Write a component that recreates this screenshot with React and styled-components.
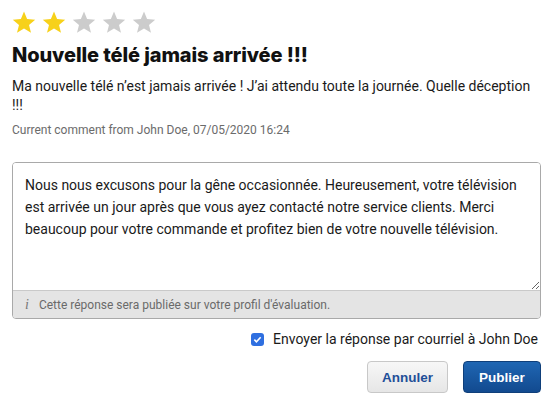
import styled, { createGlobalStyle } from "styled-components";

const GlobalStyle = createGlobalStyle`
  body {
    margin: 0;
    background: #fff;
    font-family: Roboto, "Liberation Sans", sans-serif;
    color: #1a1a1a;
  }
`;

const Page = styled.div`
  padding: 10px 15px 0 12px;
  display: flex;
  flex-direction: column;
`;

const Stars = styled.div`
  display: flex;
  gap: 6px;
  height: 24px;
  align-items: center;
`;

const Title = styled.h1`
  margin: 7px 0 0;
  font-family: Inter, Roboto, sans-serif;
  font-size: 20px;
  font-weight: 800;
  letter-spacing: -0.1px;
  color: #111;
  line-height: 28px;
`;

const Comment = styled.p`
  margin: 8px 0 0;
  font-size: 14px;
  line-height: 19px;
  color: #1a1a1a;
`;

const Meta = styled.div`
  margin-top: 8px;
  font-size: 12px;
  color: #6b6b6b;
`;

const Box = styled.div`
  margin-top: 25px;
  border: 1px solid #a9a9a9;
  border-radius: 4px;
  overflow: hidden;
  display: flex;
  flex-direction: column;
`;

const Reply = styled.textarea`
  border: none;
  outline: none;
  resize: vertical;
  height: 127px;
  padding: 11px 12px;
  font-family: Roboto, "Liberation Sans", sans-serif;
  font-size: 14px;
  line-height: 22px;
  color: #1a1a1a;
  box-sizing: border-box;
`;

const Hint = styled.div`
  background: #e4e4e4;
  border-top: 1px solid #c9c9c9;
  height: 27px;
  display: flex;
  align-items: center;
  gap: 10px;
  padding-left: 12px;
  font-size: 12px;
  color: #6a6a6a;
`;

const InfoIcon = styled.span`
  font-family: "Liberation Serif", serif;
  font-style: italic;
  font-size: 14px;
  color: #777;
`;

const CheckRow = styled.label`
  margin-top: 12px;
  margin-right: 3px;
  align-self: flex-end;
  display: flex;
  align-items: center;
  gap: 9px;
  font-size: 14px;
  color: #1a1a1a;
`;

const CheckBox = styled.span`
  width: 13px;
  height: 13px;
  border-radius: 3px;
  background: #2f6fe0;
  display: flex;
  align-items: center;
  justify-content: center;
`;

const Actions = styled.div`
  margin-top: 14px;
  display: flex;
  justify-content: flex-end;
  gap: 15px;
`;

const Button = styled.button`
  height: 32px;
  width: ${(p) => (p.$primary ? "78px" : "81px")};
  padding: 0;
  border-radius: 4px;
  font-family: "Liberation Sans", Arial, sans-serif;
  font-weight: 700;
  font-size: 13.5px;
  cursor: pointer;
  border: 1px solid ${(p) => (p.$primary ? "#0f3f7a" : "#c8c8c8")};
  color: ${(p) => (p.$primary ? "#fff" : "#1f4f98")};
  background: ${(p) =>
    p.$primary
      ? "linear-gradient(#1f66b3, #124a8f)"
      : "linear-gradient(#f7f7f7, #e6e6e6)"};
`;

const Star = ({ on }) => (
  <svg width="24" height="24" viewBox="0 0 24 24">
    <path
      d="M12 1.5l3.1 7.6 8.1.6-6.2 5.2 2 7.9L12 18.5l-7 4.3 2-7.9L.8 9.7l8.1-.6z"
      fill={on ? "#f7d11a" : "#cccccc"}
    />
  </svg>
);

export default function App() {
  const rating = 2;
  return (
    <>
      <GlobalStyle />
      <Page>
        <Stars>
          {[1, 2, 3, 4, 5].map((n) => (
            <Star key={n} on={n <= rating} />
          ))}
        </Stars>
        <Title>Nouvelle télé jamais arrivée !!!</Title>
        <Comment>
          Ma nouvelle télé n’est jamais arrivée ! J’ai attendu toute la journée. Quelle déception !!!
        </Comment>
        <Meta>Current comment from John Doe, 07/05/2020 16:24</Meta>
        <Box>
          <Reply
            defaultValue="Nous nous excusons pour la gêne occasionnée. Heureusement, votre télévision est arrivée un jour après que vous ayez contacté notre service clients. Merci beaucoup pour votre commande et profitez bien de votre nouvelle télévision."
          />
          <Hint>
            <InfoIcon>i</InfoIcon>
            Cette réponse sera publiée sur votre profil d'évaluation.
          </Hint>
        </Box>
        <CheckRow>
          <CheckBox>
            <svg width="9" height="9" viewBox="0 0 10 10">
              <path d="M1.5 5.2l2.3 2.3L8.5 2.5" stroke="#fff" strokeWidth="1.8" fill="none" />
            </svg>
          </CheckBox>
          Envoyer la réponse par courriel à John Doe
        </CheckRow>
        <Actions>
          <Button>Annuler</Button>
          <Button $primary>Publier</Button>
        </Actions>
      </Page>
    </>
  );
}
